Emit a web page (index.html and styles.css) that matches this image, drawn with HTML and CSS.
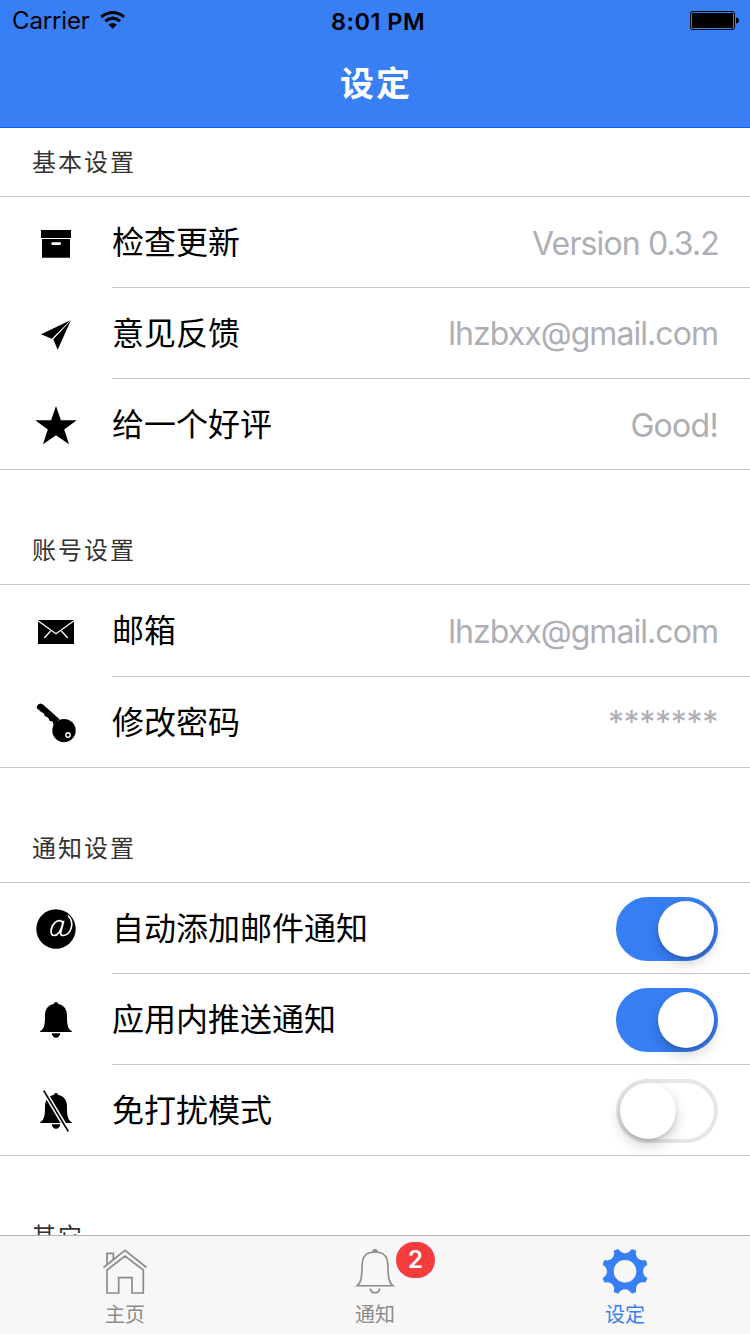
FILE: index.html
```html
<!DOCTYPE html>
<html lang="zh-CN">
<head>
<meta charset="utf-8">
<title>设定</title>
<link rel="stylesheet" href="styles.css">
</head>
<body>
<div class="app">
  <header class="navbar">
    <div class="status">
      <div class="carrier"><span class="carrier-name">Carrier</span>
        <svg class="wifi" width="26" height="18" viewBox="0 0 26 18"><g fill="none" stroke="#000" stroke-width="3"><path d="M1.3 6Q12.7-3 24.100 6"/><path d="M5.300 10.200Q12.700 4 20.100 10.200"/></g><path d="M8.400 13.500Q12.700 10.300 17 13.500L12.700 17.800Z"/></svg>
      </div>
      <div class="clock">8:01 PM</div>
      <svg class="battery" width="50" height="20" viewBox="0 0 50 20"><rect x=".5" y=".5" width="44" height="18" rx="2.500" fill="none" stroke="#000"/><rect x="2" y="2" width="41" height="15" rx="1"/><path d="M46 6.500q3 .5 3 3t-3 3z"/></svg>
    </div>
    <h1 class="title">设定</h1>
  </header>

  <main class="content">
    <h2 class="group-title first">基本设置</h2>
    <section class="list">
      <div class="row"><svg class="icon" viewBox="0 0 48 48"><path d="M9 12h30v8H9z"/><path fill-rule="evenodd" d="M10 21h28v18.700H10zM20.500 24.200q-1.200 0-1.200 1.400t1.200 1.400h7.400q1.200 0 1.200-1.400t-1.200-1.400z"/></svg><div class="cell"><span class="label">检查更新</span><span class="note version">Version 0.3.2</span></div></div>
      <div class="row"><svg class="icon" viewBox="0 0 48 48"><path d="M39 11 9 25.300l10.700 4.400zM39 11 21.200 30.300l4.500 10.400z"/><path d="M39 11 20.500 30.500" stroke="#fff" stroke-width=".8"/></svg><div class="cell"><span class="label">意见反馈</span><span class="note mail">lhzbxx@gmail.com</span></div></div>
      <div class="row"><svg class="icon" viewBox="0 0 48 48"><path d="m24 6 4.900 14.300h15.800l-12.500 9.300L37 44.300l-13-9-13 9 4.800-14.700L3.300 20.300h15.800z"/></svg><div class="cell"><span class="label">给一个好评</span><span class="note good">Good!</span></div></div>
    </section>

    <h2 class="group-title">账号设置</h2>
    <section class="list">
      <div class="row tall"><svg class="icon" viewBox="0 0 48 48"><path d="M6 13h36v24H6z"/><path d="m6 13.700 18 13.100 18-13.100M18.600 24l-6.300 7M29.400 24l6.300 7" fill="none" stroke="#fff" stroke-width="1.300"/></svg><div class="cell"><span class="label">邮箱</span><span class="note mail">lhzbxx@gmail.com</span></div></div>
      <div class="row"><svg class="icon" viewBox="0 0 48 48"><path d="M4.700 8.700Q5.600 5.800 8.300 5.400l2.700 1.200L27.500 21.300 21 27v-3.300l-2-.5-1.700-.8-.6-2-2-1.700-2-.8-.7-2-1-1.200-2-.8-1-1.200-3-2.300z"/><circle cx="32" cy="32.600" r="11.700"/><circle cx="36" cy="37" r="2.200" fill="none" stroke="#fff" stroke-width="1.400"/></svg><div class="cell"><span class="label">修改密码</span><span class="note stars">*******</span></div></div>
    </section>

    <h2 class="group-title">通知设置</h2>
    <section class="list">
      <div class="row"><svg class="icon" viewBox="0 0 48 48"><circle cx="24" cy="25" r="19.700"/><path d="M31.700 16.800 28.700 28.500Q28.300 31.700 31.200 31.500C38.500 31 43.500 19 36 11.500M30.800 19.500C30 15.500 25.500 15.800 22.500 19 18 24 18 31.500 22 31.500 25.500 31.500 28.800 27 30.500 20.500" fill="none" stroke="#fff" stroke-width="1.700"/></svg><div class="cell"><span class="label">自动添加邮件通知</span><span class="toggle on"><span class="knob"></span></span></div></div>
      <div class="row"><svg class="icon" viewBox="0 0 48 48"><path id="bell" d="M24 7q2 0 2.300 2c6.200 1.200 8.700 5.600 8.700 12 0 7 .2 12.700 5 15.500v.5H8v-.5c4.800-2.800 5-8.500 5-15.500 0-6.400 2.500-10.800 8.700-12Q22 7 24 7zM19.700 38.300h8.600q-.8 4.400-4.300 4.400t-4.300-4.400z"/></svg><div class="cell"><span class="label">应用内推送通知</span><span class="toggle on"><span class="knob"></span></span></div></div>
      <div class="row"><svg class="icon" viewBox="0 0 48 48"><use href="#bell"/><path d="m11.700 4.500 24.600 41" stroke="#fff" stroke-width="4.600"/><path d="m11.700 4.500 24.600 41" stroke="#000" stroke-width="1.500"/></svg><div class="cell"><span class="label">免打扰模式</span><span class="toggle"><span class="knob"></span></span></div></div>
    </section>

    <h2 class="group-title">其它</h2>
  </main>

  <nav class="tabs">
    <a class="tab"><svg class="tab-icon" viewBox="0 0 48 48"><g fill="none" stroke="#8c8c8c" stroke-width="1.700"><path d="M2.500 21.500 24 4.300l21.500 17.200"/><path d="M6 24 24 10l18.300 14v23H31V31.700H17.700V47H6zM6 18.700V7.300h6.300v6.200"/></g></svg><span>主页</span></a>
    <a class="tab"><svg class="tab-icon" viewBox="0 0 48 48"><g fill="none" stroke="#8c8c8c" stroke-width="1.600"><path d="M24 6c8 0 12.500 4.500 12.800 12 .4 10 0 18 5.200 21.800H6C11.200 36 10.800 28 11.200 18 11.500 10.500 16 6 24 6zM19.200 42.500q.8 4.300 4.800 4.300t4.800-4.300"/></g><path d="M21.200 6q0-3 2.800-3t2.800 3z" fill="#8c8c8c"/></svg><span>通知</span><b class="badge">2</b></a>
    <a class="tab active"><svg class="tab-icon" viewBox="-24 -25.300 48 48"><path fill="#387ef5" fill-rule="evenodd" d="M6.900-22.400 11.200-20.600 11-19A7 7 0 0 0 19-11L20.600-11.200 22.400-6.900 21.300-5.900A7 7 0 0 0 21.300 5.900L22.400 6.900 20.600 11.200 19 11A7 7 0 0 0 11 19L11.200 20.600 6.900 22.400 5.900 21.300A7 7 0 0 0-5.900 21.300L-6.900 22.400-11.200 20.600-11 19A7 7 0 0 0-19 11L-20.600 11.200-22.400 6.900-21.300 5.900A7 7 0 0 0-21.300-5.900L-22.400-6.900-20.600-11.200-19-11A7 7 0 0 0-11-19L-11.200-20.600-6.900-22.400-5.900-21.300A7 7 0 0 0 5.900-21.300zM11.300 0A11.300 11.300 0 1 0-11.300 0 11.300 11.300 0 1 0 11.300 0z"/></svg><span>设定</span></a>
  </nav>
</div>
</body>
</html>
```
FILE: styles.css
```css
* { box-sizing: border-box; }
body {
  margin: 0;
  background: #fff;
  color: #000;
  font-family: Inter, "Noto Sans CJK SC", sans-serif;
}
.app {
  display: flex;
  flex-direction: column;
  width: 750px;
  height: 1334px;
  overflow: hidden;
}
.navbar {
  flex: none;
  height: 128px;
  background: #387ef5;
  border-bottom: 1px solid #0c60ee;
}
.status {
  display: grid;
  grid-template-columns: 1fr auto 1fr;
  align-items: center;
  height: 40px;
  padding: 0 10px 0 12px;
  font-size: 24px;
}
.carrier { display: flex; align-items: center; gap: 10px; }
.carrier-name { letter-spacing: -0.15px; padding-top: 1px; }
.clock { font-weight: 600; font-size: 23.5px; letter-spacing: 0.5px; padding: 2px 0 0 4px; }
.battery { justify-self: end; margin-top: 1px; }
.title {
  margin: 0;
  height: 88px;
  line-height: 88px;
  padding-left: 2px;
  text-align: center;
  color: #fff;
  font-size: 34px;
  font-weight: 700;
  letter-spacing: 2px;
}
.content { flex: 1; min-height: 0; overflow: hidden; }
.group-title {
  margin: 0;
  height: 114px;
  padding: 63px 0 0 32px;
  color: #333;
  font-size: 24px;
  font-weight: 400;
  line-height: 36px;
  letter-spacing: 2px;
}
.group-title.first { height: 68px; padding-top: 17px; }
.list { border-top: 1px solid #c8c7cc; border-bottom: 1px solid #c8c7cc; }
.row { display: flex; align-items: center; height: 90px; padding-left: 32px; }
.row + .row { height: 91px; }
.row.tall { height: 91px; }
.icon { flex: none; width: 48px; height: 48px; margin-right: 32px; }
.cell {
  flex: 1;
  align-self: stretch;
  display: flex;
  align-items: center;
  justify-content: space-between;
  padding-right: 32px;
}
.row + .row .cell { border-top: 1px solid #c8c7cc; }
.row + .row .icon { margin-top: 1px; }
.label { font-size: 32px; line-height: 48px; padding-top: 2px; }
.tall .label { padding-top: 0; }
.note { color: #aeaeb5; font-size: 32px; line-height: 40px; padding-top: 2px; }
.version { letter-spacing: -0.88px; margin-right: -1px; padding-top: 3px; }
.mail { letter-spacing: -0.95px; }
.good { letter-spacing: -0.7px; padding-top: 3px; }
.stars { letter-spacing: -0.3px; }
.toggle {
  width: 102px;
  height: 64px;
  margin-top: 2px;
  border: 4px solid #e6e6e6;
  border-radius: 32px;
  display: flex;
}
.toggle.on { background: #387ef5; border-color: #387ef5; justify-content: flex-end; }
.knob {
  width: 56px;
  height: 56px;
  border-radius: 50%;
  background: #fff;
  box-shadow: 0 6px 14px rgba(0,0,0,.2), 0 2px 3px rgba(0,0,0,.12);
}
.tabs {
  flex: none;
  height: 99px;
  display: grid;
  grid-template-columns: repeat(3, 1fr);
  background: #f7f7f7;
  border-top: 1px solid #b2b2b2;
}
.tab {
  position: relative;
  display: flex;
  flex-direction: column;
  align-items: center;
  padding-top: 10px;
  color: #8c8c8c;
  font-size: 20px;
  line-height: 30px;
}
.tab.active { color: #387ef5; }
.tab-icon { flex: none; width: 48px; height: 48px; margin-bottom: 6px; overflow: visible; }
.badge {
  position: absolute;
  left: 146px;
  top: 6px;
  width: 39px;
  height: 36px;
  border-radius: 18px;
  background: #f53d3d;
  color: #fff;
  font-size: 24px;
  font-weight: 600;
  line-height: 36px;
  text-align: center;
}
```
